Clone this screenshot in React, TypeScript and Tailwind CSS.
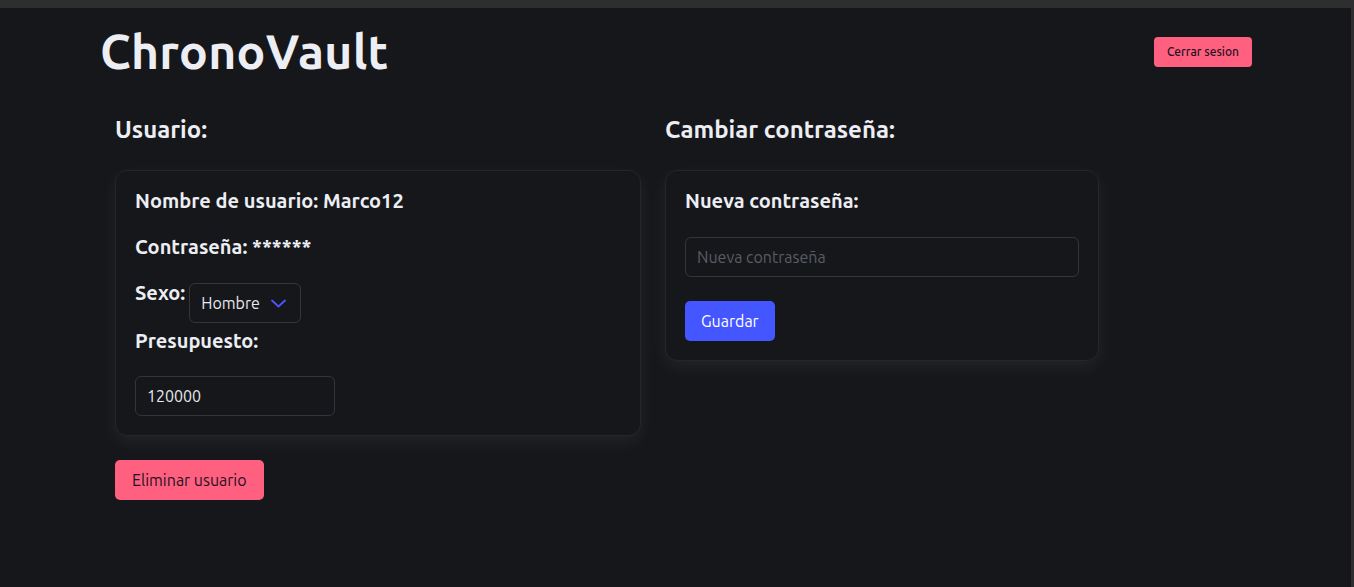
export default function App() {
  return (
    <div className="min-h-[587px] w-full bg-[#16171b] text-[#eceef3] font-['Ubuntu','Noto_Sans',sans-serif] flex flex-col">
      <div className="h-[8px] bg-[#2e2e2e]" />
      <div className="flex flex-1">
        <div className="flex-1">
          {/* header */}
          <header className="flex items-start justify-between pl-[100px] pr-[99px] pt-[15px]">
            <h1 className="text-[48px] font-bold leading-[56px] tracking-[0.3px]">ChronoVault</h1>
            <button className="mt-[14px] h-[30px] px-[13px] rounded-[4px] bg-[#ff6080] text-[#1d1220] text-[12px] font-medium">
              Cerrar sesion
            </button>
          </header>

          <main className="flex gap-[24px] pl-[115px] pt-[36px]">
            {/* user column */}
            <section className="w-[526px]">
              <h2 className="text-[24px] font-bold leading-[30px] mb-[25px]">Usuario:</h2>
              <div className="rounded-[12px] border border-[#25262c] bg-[#16171b] shadow-[0_6px_18px_rgba(255,255,255,0.06)] px-[19px] pt-[16px] pb-[19px]">
                <p className="text-[20px] font-bold leading-[28px]">Nombre de usuario: Marco12</p>
                <p className="text-[20px] font-bold leading-[28px] mt-[18px]">Contraseña: ******</p>
                <div className="flex items-start mt-[18px]">
                  <span className="text-[20px] font-bold leading-[28px]">Sexo:</span>
                  <div className="ml-[4px] mt-[4px] h-[40px] w-[112px] rounded-[6px] border border-[#34353c] flex items-center pl-[11px] gap-[11px] text-[16px] text-[#e6e8ee]">
                    Hombre
                    <svg width="15" height="9" viewBox="0 0 15 9" fill="none" className="mt-[1px]">
                      <path d="M1 1.5 L7.5 7.5 L14 1.5" stroke="#4a56ff" strokeWidth="1.8" strokeLinecap="round" strokeLinejoin="round" />
                    </svg>
                  </div>
                </div>
                <p className="text-[20px] font-bold leading-[28px] mt-[4px]">Presupuesto:</p>
                <div className="mt-[21px] h-[40px] w-[200px] rounded-[6px] border border-[#34353c] flex items-center px-[11px] text-[16px] text-[#e6e8ee]">
                  120000
                </div>
              </div>
              <button className="mt-[24px] h-[40px] px-[17px] rounded-[5px] bg-[#ff6080] text-[#1d1220] text-[16px]">
                Eliminar usuario
              </button>
            </section>

            {/* password column */}
            <section className="w-[434px]">
              <h2 className="text-[24px] font-bold leading-[30px] mb-[25px]">Cambiar contraseña:</h2>
              <div className="rounded-[12px] border border-[#25262c] bg-[#16171b] shadow-[0_6px_18px_rgba(255,255,255,0.06)] px-[19px] pt-[16px] pb-[19px]">
                <p className="text-[20px] font-bold leading-[28px]">Nueva contraseña:</p>
                <input
                  placeholder="Nueva contraseña"
                  className="mt-[22px] block h-[40px] w-full rounded-[6px] border border-[#34353c] bg-transparent px-[11px] text-[16px] text-[#e6e8ee] placeholder:text-[#5a5c63] outline-none"
                />
                <button className="mt-[24px] h-[40px] px-[16px] rounded-[5px] bg-[#4356ff] text-white text-[16px]">
                  Guardar
                </button>
              </div>
            </section>
          </main>
        </div>
        <div className="w-[3px] bg-[#2e2e2e]" />
      </div>
    </div>
  )
}
